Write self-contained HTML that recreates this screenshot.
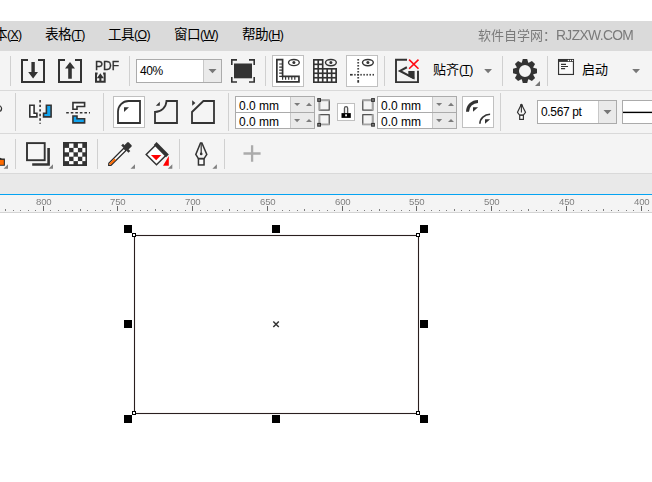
<!DOCTYPE html>
<html lang="zh-CN">
<head>
<meta charset="utf-8">
<title>CorelDRAW</title>
<style>
html,body{margin:0;padding:0;}
body{width:652px;height:482px;overflow:hidden;background:#fff;position:relative;
 font-family:"Liberation Sans","Noto Sans CJK SC",sans-serif;font-size:12px;color:#1e1e1e;}
.abs{position:absolute;}
#menubar{position:absolute;left:0;top:21px;width:652px;height:30px;background:#dadada;}
#menubar span.mi{position:absolute;top:6px;font-size:13.6px;letter-spacing:-0.6px;line-height:16px;white-space:nowrap;color:#000;}
.wl{font-size:13.8px;letter-spacing:-0.62px;}
#menubar span.wm{will-change:transform;}
.la{font-size:12.4px;letter-spacing:-0.7px;}
#menubar span.mi u{text-decoration:underline;text-underline-offset:1px;}
#menubar span.wm{position:absolute;top:7px;font-size:13px;line-height:16px;color:#7a7a7a;white-space:nowrap;}
.row{position:absolute;left:0;width:652px;background:#f4f4f4;border-bottom:1px solid #d9d9d9;box-sizing:border-box;}
#row1{top:51px;height:40px;}
#row2{top:91px;height:43px;}
#row3{top:134px;height:40px;}
.sep{position:absolute;width:1px;background:#d2d2d2;}
#tabs{position:absolute;left:0;top:174px;width:652px;height:20px;background:#e9e9e9;}
#blue{position:absolute;left:0;top:194px;width:652px;height:1px;background:#04a3f2;}
#ruler{position:absolute;left:0;top:195px;width:652px;height:17px;background:#f4f4f4;border-bottom:1px solid #d4d4d4;}
#canvas{position:absolute;left:0;top:213px;width:652px;height:269px;background:#fff;}
.field{position:absolute;background:#fff;border:1px solid #ababab;box-sizing:border-box;font-size:12px;color:#000;white-space:nowrap;}
.btnsel{position:absolute;background:#fff;border:1px solid #c0c0c0;box-sizing:border-box;}
.dd{position:absolute;background:#eaeaea;border-left:1px solid #c8c8c8;box-sizing:border-box;}
svg{position:absolute;overflow:visible;}
.t{position:absolute;white-space:nowrap;}
</style>
</head>
<body>
<div id="menubar">
 <span class="mi" style="left:-6px">本<span class="la">(<u>X</u>)</span></span>
 <span class="mi" style="left:45px">表格<span class="la">(<u>T</u>)</span></span>
 <span class="mi" style="left:108px">工具<span class="la">(<u>O</u>)</span></span>
 <span class="mi" style="left:174px">窗口<span class="la">(<u>W</u>)</span></span>
 <span class="mi" style="left:242px">帮助<span class="la">(<u>H</u>)</span></span>
 <span class="wm" style="left:478px">软件自学网：<span class="wl">RJZXW.COM</span></span>
</div>


<div id="row1" class="row">
 <div class="t" style="left:95px;top:8px;font-size:12px;line-height:14px;color:#333;-webkit-text-stroke:0.35px #333;will-change:transform;">PDF</div>
 <div class="field" style="left:136px;top:8px;width:86px;height:24px;"><span class="t" style="left:3px;top:4px;line-height:14px;letter-spacing:-0.4px;">40%</span><div class="dd" style="left:66px;top:0;width:18px;height:22px;"></div></div>
 <div class="btnsel" style="left:272px;top:4px;width:32px;height:32px;"></div>
 <div class="btnsel" style="left:346px;top:4px;width:32px;height:32px;"></div>
 <div class="t" style="left:433px;top:11px;font-size:13px;line-height:16px;color:#000;">贴齐<span class="la">(<u>T</u>)</span></div>
 <div class="t" style="left:582px;top:11px;font-size:13px;line-height:16px;color:#000;">启动</div>
</div>
<div id="row2" class="row">
 <div class="btnsel" style="left:113px;top:5px;width:32px;height:32px;"></div>
 <div class="field" style="left:235px;top:5px;width:80px;height:17px;"><span class="t" style="left:3px;top:2px;line-height:14px;">0.0 mm</span><div class="dd" style="left:54px;top:0;width:24px;height:15px;"></div></div>
 <div class="field" style="left:235px;top:21px;width:80px;height:17px;"><span class="t" style="left:3px;top:2px;line-height:14px;">0.0 mm</span><div class="dd" style="left:54px;top:0;width:24px;height:15px;"></div></div>
 <div class="btnsel" style="left:337px;top:12px;width:18px;height:18px;"></div>
 <div class="field" style="left:377px;top:5px;width:80px;height:17px;"><span class="t" style="left:3px;top:2px;line-height:14px;">0.0 mm</span><div class="dd" style="left:54px;top:0;width:24px;height:15px;"></div></div>
 <div class="field" style="left:377px;top:21px;width:80px;height:17px;"><span class="t" style="left:3px;top:2px;line-height:14px;">0.0 mm</span><div class="dd" style="left:54px;top:0;width:24px;height:15px;"></div></div>
 <div class="btnsel" style="left:462px;top:5px;width:32px;height:32px;"></div>
 <div class="field" style="left:537px;top:9px;width:80px;height:24px;"><span class="t" style="left:3px;top:4px;line-height:14px;letter-spacing:-0.35px;">0.567 pt</span><div class="dd" style="left:60px;top:0;width:18px;height:22px;"></div></div>
 <div class="field" style="left:622px;top:9px;width:40px;height:24px;"></div>
</div>
<div id="row3" class="row"></div>
<div id="tabs"></div>
<div id="blue"></div>
<div id="ruler"></div>
<div id="canvas"></div>

<svg id="ov" width="652" height="482" viewBox="0 0 652 482" style="left:0;top:0">
<g fill="#666" shape-rendering="crispEdges"><rect x="43" y="206" width="1" height="5"/><rect x="117" y="206" width="1" height="5"/><rect x="192" y="206" width="1" height="5"/><rect x="267" y="206" width="1" height="5"/><rect x="342" y="206" width="1" height="5"/><rect x="416" y="206" width="1" height="5"/><rect x="491" y="206" width="1" height="5"/><rect x="566" y="206" width="1" height="5"/><rect x="641" y="206" width="1" height="5"/></g><g fill="#7c7c7c" shape-rendering="crispEdges"><rect x="5" y="209" width="1" height="2"/><rect x="13" y="210" width="1" height="1"/><rect x="20" y="210" width="1" height="1"/><rect x="28" y="210" width="1" height="1"/><rect x="35" y="210" width="1" height="1"/><rect x="50" y="210" width="1" height="1"/><rect x="58" y="210" width="1" height="1"/><rect x="65" y="210" width="1" height="1"/><rect x="72" y="210" width="1" height="1"/><rect x="80" y="209" width="1" height="2"/><rect x="87" y="210" width="1" height="1"/><rect x="95" y="210" width="1" height="1"/><rect x="102" y="210" width="1" height="1"/><rect x="110" y="210" width="1" height="1"/><rect x="125" y="210" width="1" height="1"/><rect x="132" y="210" width="1" height="1"/><rect x="140" y="210" width="1" height="1"/><rect x="147" y="210" width="1" height="1"/><rect x="155" y="209" width="1" height="2"/><rect x="162" y="210" width="1" height="1"/><rect x="170" y="210" width="1" height="1"/><rect x="177" y="210" width="1" height="1"/><rect x="185" y="210" width="1" height="1"/><rect x="200" y="210" width="1" height="1"/><rect x="207" y="210" width="1" height="1"/><rect x="215" y="210" width="1" height="1"/><rect x="222" y="210" width="1" height="1"/><rect x="229" y="209" width="1" height="2"/><rect x="237" y="210" width="1" height="1"/><rect x="244" y="210" width="1" height="1"/><rect x="252" y="210" width="1" height="1"/><rect x="259" y="210" width="1" height="1"/><rect x="274" y="210" width="1" height="1"/><rect x="282" y="210" width="1" height="1"/><rect x="289" y="210" width="1" height="1"/><rect x="297" y="210" width="1" height="1"/><rect x="304" y="209" width="1" height="2"/><rect x="312" y="210" width="1" height="1"/><rect x="319" y="210" width="1" height="1"/><rect x="327" y="210" width="1" height="1"/><rect x="334" y="210" width="1" height="1"/><rect x="349" y="210" width="1" height="1"/><rect x="357" y="210" width="1" height="1"/><rect x="364" y="210" width="1" height="1"/><rect x="371" y="210" width="1" height="1"/><rect x="379" y="209" width="1" height="2"/><rect x="386" y="210" width="1" height="1"/><rect x="394" y="210" width="1" height="1"/><rect x="401" y="210" width="1" height="1"/><rect x="409" y="210" width="1" height="1"/><rect x="424" y="210" width="1" height="1"/><rect x="431" y="210" width="1" height="1"/><rect x="439" y="210" width="1" height="1"/><rect x="446" y="210" width="1" height="1"/><rect x="454" y="209" width="1" height="2"/><rect x="461" y="210" width="1" height="1"/><rect x="469" y="210" width="1" height="1"/><rect x="476" y="210" width="1" height="1"/><rect x="484" y="210" width="1" height="1"/><rect x="499" y="210" width="1" height="1"/><rect x="506" y="210" width="1" height="1"/><rect x="513" y="210" width="1" height="1"/><rect x="521" y="210" width="1" height="1"/><rect x="528" y="209" width="1" height="2"/><rect x="536" y="210" width="1" height="1"/><rect x="543" y="210" width="1" height="1"/><rect x="551" y="210" width="1" height="1"/><rect x="558" y="210" width="1" height="1"/><rect x="573" y="210" width="1" height="1"/><rect x="581" y="210" width="1" height="1"/><rect x="588" y="210" width="1" height="1"/><rect x="596" y="210" width="1" height="1"/><rect x="603" y="209" width="1" height="2"/><rect x="611" y="210" width="1" height="1"/><rect x="618" y="210" width="1" height="1"/><rect x="626" y="210" width="1" height="1"/><rect x="633" y="210" width="1" height="1"/><rect x="648" y="210" width="1" height="1"/></g>
<g font-size="9.6" letter-spacing="-0.25" fill="#808080" text-anchor="middle" font-family="Liberation Sans, sans-serif"><text x="43.7" y="204.9">800</text><text x="117.7" y="204.9">750</text><text x="192.7" y="204.9">700</text><text x="267.7" y="204.9">650</text><text x="342.7" y="204.9">600</text><text x="416.7" y="204.9">550</text><text x="491.7" y="204.9">500</text><text x="566.7" y="204.9">450</text><text x="641.7" y="204.9">400</text></g>
<rect x="134.5" y="235.5" width="284" height="178" fill="none" stroke="#2a1f1f" stroke-width="1.1"/>
<g fill="#000" shape-rendering="crispEdges"><rect x="124" y="225" width="8" height="8"/><rect x="124" y="320" width="8" height="8"/><rect x="124" y="415" width="8" height="8"/><rect x="272" y="225" width="8" height="8"/><rect x="272" y="415" width="8" height="8"/><rect x="420" y="225" width="8" height="8"/><rect x="420" y="320" width="8" height="8"/><rect x="420" y="415" width="8" height="8"/></g>
<rect x="132.5" y="233.5" width="3" height="3" fill="#fff" stroke="#000" stroke-width="1" shape-rendering="crispEdges"/><rect x="132.5" y="411.5" width="3" height="3" fill="#fff" stroke="#000" stroke-width="1" shape-rendering="crispEdges"/><rect x="416.5" y="233.5" width="3" height="3" fill="#fff" stroke="#000" stroke-width="1" shape-rendering="crispEdges"/><rect x="416.5" y="411.5" width="3" height="3" fill="#fff" stroke="#000" stroke-width="1" shape-rendering="crispEdges"/>
<path d="M273.3 321.5 L278.8 327 M278.8 321.5 L273.3 327" stroke="#333" stroke-width="1.5" fill="none"/>
<!-- ===== separators ===== -->
<g fill="#d0d0d0" shape-rendering="crispEdges">
<rect x="10" y="56" width="1" height="30"/>
<rect x="129" y="56" width="1" height="30"/>
<rect x="265" y="56" width="1" height="30"/>
<rect x="384" y="56" width="1" height="30"/>
<rect x="502" y="56" width="1" height="30"/>
<rect x="547" y="56" width="1" height="30"/>
<rect x="15" y="93" width="1" height="38"/>
<rect x="103" y="93" width="1" height="38"/>
<rect x="228" y="93" width="1" height="38"/>
<rect x="500" y="93" width="1" height="38"/>
<rect x="15" y="139" width="1" height="30"/>
<rect x="97" y="139" width="1" height="30"/>
<rect x="179" y="139" width="1" height="30"/>
<rect x="224" y="139" width="1" height="30"/>
</g>

<!-- ===== row 1 ===== -->
<!-- import -->
<g fill="none" stroke="#333" stroke-width="2">
<path d="M28 60 H22 V82 H44 V60 H38"/>
<path d="M65 60 H59 V82 H81 V60 H75"/>
</g>
<path d="M31.4 62 H34.8 V72 H38 L33.1 78.5 L28.2 72 H31.4 Z" fill="#333"/>
<path d="M68.2 78.7 H71.8 V68.5 H75 L70 62 L65 68.5 H68.2 Z" fill="#333"/>
<!-- pdf small icon -->
<g fill="none" stroke="#333" stroke-width="2">
<path d="M97.6 73.5 H96 V81.8 H104.7 V73.5 H103.1"/>
</g>
<path d="M99.3 82 V78.2 H96.8 L100.35 73.3 L103.9 78.2 H101.4 V82 Z" fill="#333"/>
<!-- zoom dd arrow -->
<path d="M208.5 69 H216.5 L212.5 73.3 Z" fill="#777"/>
<!-- fullscreen -->
<rect x="234" y="63.5" width="18" height="14.8" fill="#333"/>
<g fill="none" stroke="#333" stroke-width="1.6">
<path d="M237 59.9 H231.8 V65"/><path d="M249 59.9 H254.2 V65"/>
<path d="M237 82 H231.8 V77"/><path d="M249 82 H254.2 V77"/>
</g>
<!-- ruler icon -->
<path d="M276.85 59.65 H282.6 V76.3 H298.95 V81.85 H276.85 Z" fill="#fff" stroke="#333" stroke-width="1.7"/>
<g stroke="#333" stroke-width="1.2">
<path d="M279.2 64 H283 M279.2 67.1 H283 M279.2 70.2 H283 M279.2 73.2 H283 M279.2 76.3 H283"/>
<path d="M282.6 76 V79.8 M285.6 76 V79.8 M288.7 76 V79.8 M291.8 76 V79.8 M294.8 76 V79.8"/>
</g>
<ellipse cx="293.9" cy="62.6" rx="5.4" ry="3.1" fill="#fff" stroke="#333" stroke-width="1.3"/>
<circle cx="293.9" cy="62.6" r="1.5" fill="#333"/>
<!-- grid icon -->
<path d="M313 58.9 H323.5 V68 H337 V82.9 H313 Z" fill="#333"/>
<g fill="#fff">
<rect x="314.60" y="60.70" width="2.8" height="2.8"/><rect x="319.07" y="60.70" width="2.8" height="2.8"/><rect x="314.60" y="65.17" width="2.8" height="2.8"/><rect x="319.07" y="65.17" width="2.8" height="2.8"/><rect x="314.60" y="69.64" width="2.8" height="2.8"/><rect x="319.07" y="69.64" width="2.8" height="2.8"/><rect x="323.54" y="69.64" width="2.8" height="2.8"/><rect x="328.01" y="69.64" width="2.8" height="2.8"/><rect x="332.48" y="69.64" width="2.8" height="2.8"/><rect x="314.60" y="74.11" width="2.8" height="2.8"/><rect x="319.07" y="74.11" width="2.8" height="2.8"/><rect x="323.54" y="74.11" width="2.8" height="2.8"/><rect x="328.01" y="74.11" width="2.8" height="2.8"/><rect x="332.48" y="74.11" width="2.8" height="2.8"/><rect x="314.60" y="78.58" width="2.8" height="2.8"/><rect x="319.07" y="78.58" width="2.8" height="2.8"/><rect x="323.54" y="78.58" width="2.8" height="2.8"/><rect x="328.01" y="78.58" width="2.8" height="2.8"/><rect x="332.48" y="78.58" width="2.8" height="2.8"/>
</g>
<ellipse cx="330.9" cy="62.6" rx="5.4" ry="3.1" fill="#f6f6f6" stroke="#333" stroke-width="1.4"/>
<circle cx="330.9" cy="62.6" r="1.5" fill="#333"/>
<!-- guides icon -->
<g fill="#333"><rect x="357.3" y="59.10" width="1.8" height="1.4"/><rect x="357.3" y="62.10" width="1.8" height="1.4"/><rect x="357.3" y="65.10" width="1.8" height="1.4"/><rect x="357.3" y="68.10" width="1.8" height="1.4"/><rect x="357.3" y="71.10" width="1.8" height="1.4"/><rect x="357.3" y="74.10" width="1.8" height="1.4"/><rect x="357.3" y="77.10" width="1.8" height="1.4"/><rect x="357.3" y="80.1" width="1.8" height="2.6"/><rect x="350" y="73.9" width="2.7" height="1.7"/><rect x="354.25" y="73.9" width="1.4" height="1.7"/><rect x="357.30" y="73.9" width="1.4" height="1.7"/><rect x="360.35" y="73.9" width="1.4" height="1.7"/><rect x="363.40" y="73.9" width="1.4" height="1.7"/><rect x="366.45" y="73.9" width="1.4" height="1.7"/><rect x="369.50" y="73.9" width="1.4" height="1.7"/><rect x="372.55" y="73.9" width="1.4" height="1.7"/></g>
<ellipse cx="367.9" cy="62.6" rx="5.4" ry="3.1" fill="#fff" stroke="#333" stroke-width="1.4"/>
<circle cx="367.9" cy="62.6" r="1.5" fill="#333"/>
<!-- snap off -->
<path d="M407 59.8 H396 V82.1 H418 V70.8" fill="none" stroke="#333" stroke-width="1.9"/>
<path d="M406.9 67.3 L400 70.9 L414 78.4" fill="none" stroke="#333" stroke-width="2.1" stroke-linejoin="miter"/>
<path d="M408.3 71.1 H414.6 V79.6 L408.3 76.2 Z" fill="#333"/>
<path d="M409.1 59.6 L418.5 68.7 M418.5 59.6 L409.1 68.7" stroke="#ff0a14" stroke-width="1.6" fill="none"/>
<!-- snap dd arrow -->
<path d="M484.2 69 H492 L488.1 73.2 Z" fill="#777"/>
<!-- gear -->
<path d="M528.15 62.57 L527.22 59.00 L522.78 59.00 L521.85 62.57 L521.27 62.81 L518.09 60.95 L514.95 64.09 L516.81 67.27 L516.57 67.85 L513.00 68.78 L513.00 73.22 L516.57 74.15 L516.81 74.73 L514.95 77.91 L518.09 81.05 L521.27 79.19 L521.85 79.43 L522.78 83.00 L527.22 83.00 L528.15 79.43 L528.73 79.19 L531.91 81.05 L535.05 77.91 L533.19 74.73 L533.43 74.15 L537.00 73.22 L537.00 68.78 L533.43 67.85 L533.19 67.27 L535.05 64.09 L531.91 60.95 L528.73 62.81 Z M531.00 71.00 A6.0 6.0 0 1 0 519.00 71.00 A6.0 6.0 0 1 0 531.00 71.00 Z" fill="#333" fill-rule="evenodd"/>
<path d="M540 81 V86 H535 Z" fill="#777"/>
<!-- launch icon -->
<rect x="558.55" y="59.55" width="14.9" height="14.9" fill="#fafafa" stroke="#333" stroke-width="1.15"/>
<rect x="558" y="59" width="16" height="2.9" fill="#333"/>
<g fill="#fff"><circle cx="568.4" cy="60.5" r="0.7"/><circle cx="570.45" cy="60.5" r="0.7"/><circle cx="572.5" cy="60.5" r="0.7"/></g>
<g stroke="#333" stroke-width="1.1"><path d="M561 64.4 H566 M561 66.5 H568 M561 68.6 H565.1"/></g>
<path d="M632.2 69 H640 L636.1 73.2 Z" fill="#777"/>

<!-- ===== row 2 ===== -->
<!-- degree fragment -->
<circle cx="-1.3" cy="108.6" r="2.9" fill="none" stroke="#333" stroke-width="1.2"/>
<!-- mirror H -->
<path d="M29.8 105.3 H34.1 V113.3 H36.9 V116.9 H29.8 Z" fill="#fff" stroke="#333" stroke-width="1.6"/>
<path d="M51.1 105.3 H46.4 V113.3 H43.55 V116.9 H51.1 Z" fill="#12a5f0" stroke="#333" stroke-width="1.6"/>
<path d="M40.1 100.1 V123.8" stroke="#333" stroke-width="1.6" stroke-dasharray="2.4 2.15" fill="none"/>
<!-- mirror V -->
<path d="M72.95 102.6 H84.6 V106.5 H77 V109.2 H72.95 Z" fill="#fff" stroke="#333" stroke-width="1.6"/>
<path d="M72.95 122.9 H84.6 V118.8 H77 V116 H72.95 Z" fill="#12a5f0" stroke="#333" stroke-width="1.6"/>
<path d="M66.2 112.8 H90" stroke="#333" stroke-width="1.5" stroke-dasharray="2.6 1.95" fill="none"/>
<!-- round corner -->
<path d="M118 123 V111.5 A10.5 10.5 0 0 1 128.5 101 H140 V123 Z" fill="#fff" stroke="#333" stroke-width="1.8"/>
<path d="M124 107.3 H129 L124 112 Z" fill="#333"/>
<!-- scalloped -->
<path d="M155 123 V112 A11.5 11.5 0 0 0 166.5 101 H177 V123 Z" fill="none" stroke="#333" stroke-width="1.8"/>
<path d="M159.8 101.8 V105.7 H155.8 Z" fill="#333"/>
<!-- chamfer -->
<path d="M192 123 V112 L203.4 101 H214 V123 Z" fill="none" stroke="#333" stroke-width="1.8"/>
<path d="M192.2 100.2 L195.4 103 L192.2 105.8 Z" fill="#333"/>
<!-- spin arrows -->
<g fill="#7c7c7c"><path d="M294.1 102.9 H300.1 L297.1 106.10000000000001 Z"/><path d="M306 105.9 H312 L309 102.7 Z"/><path d="M294.1 119.1 H300.1 L297.1 122.3 Z"/><path d="M306 122.1 H312 L309 118.89999999999999 Z"/><path d="M436.1 102.9 H442.1 L439.1 106.10000000000001 Z"/><path d="M448 105.9 H454 L451 102.7 Z"/><path d="M436.1 119.1 H442.1 L439.1 122.3 Z"/><path d="M448 122.1 H454 L451 118.89999999999999 Z"/></g>
<!-- corner mini icons -->
<rect x="319.3" y="100.2" width="9.90" height="9.90" fill="none" stroke="#383838" stroke-width="1.1"/><path d="M319.60 99.7 V110.6 M318.8 100.50 H329.7" stroke="#a4a4a4" stroke-width="1.6" fill="none"/><rect x="317.80" y="98.70" width="2.6" height="2.6" fill="#a8a8a8" stroke="#333" stroke-width="1.2"/>
<rect x="319.3" y="114.7" width="9.90" height="9.90" fill="none" stroke="#383838" stroke-width="1.1"/><path d="M319.60 114.2 V125.1 M318.8 124.30 H329.7" stroke="#a4a4a4" stroke-width="1.6" fill="none"/><rect x="317.80" y="123.50" width="2.6" height="2.6" fill="#a8a8a8" stroke="#333" stroke-width="1.2"/>
<rect x="362.8" y="100.2" width="10.00" height="9.90" fill="none" stroke="#383838" stroke-width="1.1"/><path d="M372.50 99.7 V110.6 M362.3 100.50 H373.3" stroke="#a4a4a4" stroke-width="1.6" fill="none"/><rect x="371.70" y="98.70" width="2.6" height="2.6" fill="#a8a8a8" stroke="#333" stroke-width="1.2"/>
<rect x="362.8" y="114.7" width="10.00" height="9.90" fill="none" stroke="#383838" stroke-width="1.1"/><path d="M372.50 114.2 V125.1 M362.3 124.30 H373.3" stroke="#a4a4a4" stroke-width="1.6" fill="none"/><rect x="371.70" y="123.50" width="2.6" height="2.6" fill="#a8a8a8" stroke="#333" stroke-width="1.2"/>
<!-- lock -->
<path d="M344.45 113.5 V108.3 A1.6 1.6 0 0 1 347.65 108.3 V113.5" fill="#f4f4f4" stroke="#555" stroke-width="1.3"/>
<rect x="341.5" y="113.1" width="9.3" height="4.8" fill="#000"/>
<rect x="345.2" y="114.3" width="1.7" height="2" fill="#fff"/>
<!-- relative corner -->
<path d="M467.5 111.8 A10.5 10.5 0 0 1 478 101.4" fill="none" stroke="#333" stroke-width="3"/>
<path d="M473 107.2 H478.1 L473 111.8 Z" fill="#333"/>
<path d="M479.9 123.7 A10.2 9.4 0 0 1 490.1 114.3" fill="none" stroke="#333" stroke-width="1.6"/>
<path d="M485 119.3 H490.2 L485 123.8 Z" fill="#333"/>
<!-- pen nib small -->
<path d="M521.4 104.3 L525.5 112.3 L523.5 115 H519.5 L517.5 112.3 Z" fill="#f4f4f4" stroke="#333" stroke-width="1.2" stroke-linejoin="round"/>
<path d="M521.4 104.4 V112.6" stroke="#333" stroke-width="1.1"/>
<circle cx="521.4" cy="105.2" r="1.3" fill="#333"/>
<rect x="519.7" y="115.3" width="3.7" height="4.1" fill="#fff" stroke="#333" stroke-width="1.2"/>
<!-- outline dd arrow -->
<path d="M603.5 110 H611.5 L607.5 114.3 Z" fill="#777"/>
<!-- line style sample -->
<rect x="623" y="111.7" width="30" height="1.4" fill="#000"/>

<!-- ===== row 3 ===== -->
<!-- orange at left edge -->
<path d="M-2 157 L2 158.6 H4.9 V165.8 H-2 Z" fill="#2a2a2a"/>
<rect x="-2" y="159.9" width="5.8" height="4.9" fill="#ff6a00"/>
<path d="M8 164.2 V168.7 H3.6 Z" fill="#808080"/>
<!-- shadow -->
<rect x="27" y="143.1" width="17.7" height="17.1" fill="#f6f6f6" stroke="#333" stroke-width="1.9"/>
<path d="M48.6 148 V164.55 H32.2" fill="none" stroke="#333" stroke-width="2.6"/>
<path d="M53 164.2 V168.7 H48.5 Z" fill="#808080"/>
<!-- checker -->
<rect x="63" y="142" width="24" height="24" fill="#333"/>
<g fill="#fff">
<rect x="69.1" y="143.5" width="4.40" height="4.40"/><rect x="77.9" y="143.5" width="4.40" height="4.40"/><rect x="64.7" y="147.9" width="4.40" height="4.40"/><rect x="73.5" y="147.9" width="4.40" height="4.40"/><rect x="82.3" y="147.9" width="3.10" height="4.40"/><rect x="69.1" y="152.3" width="4.40" height="4.40"/><rect x="77.9" y="152.3" width="4.40" height="4.40"/><rect x="64.7" y="156.7" width="4.40" height="4.40"/><rect x="73.5" y="156.7" width="4.40" height="4.40"/><rect x="82.3" y="156.7" width="3.10" height="4.40"/><rect x="69.1" y="161.1" width="4.40" height="3.10"/><rect x="77.9" y="161.1" width="4.40" height="3.10"/>
</g>
<!-- eyedropper -->
<path d="M108.7 165.3 L108.8 163.2 L123.8 148.2 L126 150.4 L111 165.3 Z" fill="#fff" stroke="#2b2b2b" stroke-width="1.25" stroke-linejoin="miter"/>
<path d="M109.3 164.8 L109.4 163.5 L114.4 158.5 L115.9 160 L110.7 164.8 Z" fill="#ff6a00"/>
<path d="M122.1 144.6 L129.4 151.9" stroke="#333" stroke-width="2.5"/>
<rect x="-2.95" y="-2.95" width="5.9" height="5.9" rx="1.1" transform="translate(128 145.9) rotate(45)" fill="#333"/>
<path d="M135 164.2 V168.7 H130.5 Z" fill="#808080"/>
<!-- fill bucket -->
<path d="M146.2 154.5 L156.5 144.2 L166.8 154.5 L156.5 164.8 Z" fill="#fff" stroke="#333" stroke-width="1.5"/>
<path d="M156.55 142.1 L168.8 154.5 L166 157.3 L153.8 144.9 Z" fill="#333"/>
<path d="M150.9 155.1 H161.3 L156.2 160.3 Z" fill="#f00"/>
<path d="M168.8 155.9 V165.8 H163 Z" fill="#f00"/>
<path d="M172.3 164.2 V168.7 H167.8 Z" fill="#808080"/>
<!-- pen -->
<path d="M200.5 142.9 H201.9 L206.8 154.4 L204.1 158.6 H198.4 L195.8 154.4 Z" fill="#f4f4f4" stroke="#333" stroke-width="1.5" stroke-linejoin="miter"/>
<path d="M201.2 143 V153.5" stroke="#333" stroke-width="1.2"/>
<circle cx="201.2" cy="153.9" r="1.35" fill="#333"/>
<rect x="198.45" y="158.85" width="5.6" height="6.1" fill="#fafafa" stroke="#333" stroke-width="1.5"/>
<path d="M216.9 164.2 V168.7 H212.4 Z" fill="#808080"/>
<!-- plus -->
<path d="M252.1 145.2 V161.8 M243.5 153.5 H260.6" stroke="#ababab" stroke-width="2.3" fill="none"/>

</svg>
</body>
</html>
